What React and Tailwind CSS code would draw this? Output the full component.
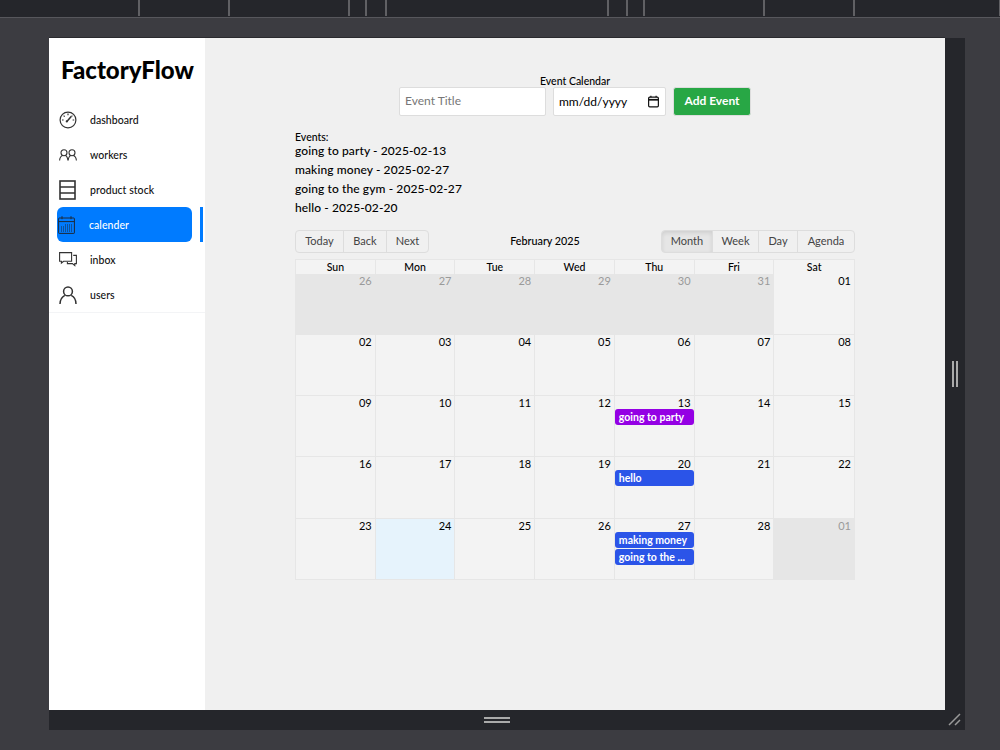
import React from "react";

const font = "font-['Lato','Noto_Sans',sans-serif]";

const GaugeIcon = () => (
  <svg width="18" height="18" viewBox="0 0 18 18" fill="none" stroke="#333" strokeWidth="1.2">
    <circle cx="9" cy="9" r="7.9" />
    <path d="M7.9 10.4 12.4 5.2" strokeWidth="1.5" />
    <circle cx="7.8" cy="10.4" r="1.1" fill="#333" stroke="none" />
    <path d="M9 2.6v1.6M3 9h1.6M13.6 9h1.6M4.6 4.6l1.1 1.1M13.4 4.6l-.8.8" />
  </svg>
);

const WorkersIcon = () => (
  <svg width="18" height="12" viewBox="0 0 18 12" fill="none" stroke="#333" strokeWidth="1.1">
    <circle cx="5" cy="3.7" r="3" />
    <circle cx="13" cy="3.7" r="3" />
    <path d="M.6 11.5C.8 8.6 2.4 6.9 3.6 6.5M6.4 6.5c1.2.5 2.2 2 2.5 5M9.2 11.5c.2-2.9 1.6-4.6 2.6-5M14.4 6.5c1.3.5 2.8 2.1 3 5" />
  </svg>
);

const StockIcon = () => (
  <svg width="17" height="20" viewBox="0 0 17 20" fill="none" stroke="#333" strokeWidth="1.6">
    <rect x="1" y="1" width="15" height="18" />
    <path d="M1 7h15M1 13h15" />
  </svg>
);

const CalendarIcon = () => {
  const dots = [];
  for (let y = 8.5; y <= 15; y += 2) {
    for (let x = 3; x <= 13; x += 2) {
      if (y === 8.5 && x < 7) continue;
      dots.push(<rect key={x + "-" + y} x={x} y={y} width="1" height="1" fill="#1c2a3a" stroke="none" />);
    }
  }
  return (
    <svg width="17" height="18" viewBox="0 0 17 18" fill="none" stroke="#1c2a3a" strokeWidth="1">
      <rect x=".6" y="2" width="15.8" height="15.4" rx=".6" />
      <path d="M.6 5.6h15.8M4 .2v3M13 .2v3" />
      {dots}
    </svg>
  );
};

const InboxIcon = () => (
  <svg width="18" height="15" viewBox="0 0 18 15" fill="none" stroke="#333" strokeWidth="1.1">
    <path d="M.6.6h12v8.6H4.6L2.4 11V9.2H.6z" />
    <path d="M14.2 3.4h3.2v8.2h-1.6v2l-2.4-2H8.4V10" />
  </svg>
);

const UserIcon = () => (
  <svg width="18" height="18" viewBox="0 0 18 18" fill="none" stroke="#333" strokeWidth="1.5">
    <circle cx="9" cy="5.4" r="4.4" />
    <path d="M1 18c0-4.4 2.6-7.4 4.8-8.6M12.2 9.4C14.6 10.6 17 13.6 17 18" />
  </svg>
);

const navItems = [
  { label: "dashboard", icon: <GaugeIcon /> },
  { label: "workers", icon: <WorkersIcon /> },
  { label: "product stock", icon: <StockIcon /> },
  { label: "calender", icon: <CalendarIcon />, active: true },
  { label: "inbox", icon: <InboxIcon /> },
  { label: "users", icon: <UserIcon /> },
];

const events = [
  "going to party - 2025-02-13",
  "making money - 2025-02-27",
  "going to the gym - 2025-02-27",
  "hello - 2025-02-20",
];

const weeks = [
  [
    { d: "26", off: true },
    { d: "27", off: true },
    { d: "28", off: true },
    { d: "29", off: true },
    { d: "30", off: true },
    { d: "31", off: true },
    { d: "01" },
  ],
  [{ d: "02" }, { d: "03" }, { d: "04" }, { d: "05" }, { d: "06" }, { d: "07" }, { d: "08" }],
  [
    { d: "09" },
    { d: "10" },
    { d: "11" },
    { d: "12" },
    { d: "13", ev: [{ t: "going to party", purple: true }] },
    { d: "14" },
    { d: "15" },
  ],
  [
    { d: "16" },
    { d: "17" },
    { d: "18" },
    { d: "19" },
    { d: "20", ev: [{ t: "hello" }] },
    { d: "21" },
    { d: "22" },
  ],
  [
    { d: "23" },
    { d: "24", today: true },
    { d: "25" },
    { d: "26" },
    { d: "27", ev: [{ t: "making money" }, { t: "going to the ..." }] },
    { d: "28" },
    { d: "01", off: true },
  ],
];

const rowHeights = ["h-[60px]", "h-[61px]", "h-[61px]", "h-[62px]", "h-[61px]"];

const Sidebar = () => (
  <aside className="w-[156px] shrink-0 bg-white">
    <div className="h-[64px] pl-[12px] pt-[18px] text-[24px] leading-[28px] font-black text-black whitespace-nowrap">
      FactoryFlow
    </div>
    <nav className="border-b border-gray-100">
      {navItems.map((item) => (
        <div key={item.label} className="relative flex h-[35px] items-center">
          <div
            className={
              "ml-2 flex h-[35px] w-[135px] items-center rounded-md " +
              (item.active ? "bg-[#007bff] text-white" : "text-[#111]")
            }
          >
            <span className={"flex w-[32px] items-center pl-[1px] " + (item.active ? "" : "ml-[1px]")}>
              {item.icon}
            </span>
            <span className="pt-[1px] text-[10.5px] font-medium leading-none tracking-[0.05px] whitespace-nowrap">
              {item.label}
            </span>
          </div>
          {item.active && <div className="ml-2 h-[35px] w-[3px] bg-[#007bff]" />}
        </div>
      ))}
    </nav>
  </aside>
);

const ToolButton = ({ label, active, first, last, width }) => (
  <div
    className={
      "flex h-[23px] items-center justify-center border border-[#ddd] text-[11px] text-[#444] -ml-[1px] first:ml-0 " +
      width + " " +
      (first ? "rounded-l " : "") +
      (last ? "rounded-r " : "") +
      (active ? "bg-[#e6e6e6] shadow-[inset_0_2px_4px_rgba(0,0,0,0.1)]" : "")
    }
  >
    {label}
  </div>
);

const MonthCell = ({ cell }) => (
  <div
    className={
      "border-r border-[#e6e6e6] last:border-r-0 " +
      (cell.off ? "bg-[#e6e6e6] " : cell.today ? "bg-[#e6f3fc] " : "")
    }
  >
    <div
      className={
        "h-[13px] pr-[3px] text-right text-[11px] leading-[14px] " +
        (cell.off ? "text-[#9a9a9a]" : "text-black")
      }
    >
      {cell.d}
    </div>
    <div className="flex flex-col gap-[1px]">
      {cell.ev?.map((e) => (
        <div
          key={e.t}
          className={
            "ml-[0.5px] h-[16px] rounded-[3px] pl-[3.5px] text-[10.5px] font-bold leading-[16px] text-white whitespace-nowrap overflow-hidden " +
            (e.purple ? "bg-[#9400e4]" : "bg-[#2b54e8]")
          }
        >
          {e.t}
        </div>
      ))}
    </div>
  </div>
);

const Calendar = () => (
  <div className="border border-[#e6e6e6] bg-[#f3f3f3]">
    <div className="grid h-[14px] grid-cols-7">
      {["Sun", "Mon", "Tue", "Wed", "Thu", "Fri", "Sat"].map((d) => (
        <div
          key={d}
          className="border-r border-[#e6e6e6] last:border-r-0 text-center text-[10.5px] leading-[14px] font-medium text-black"
        >
          {d}
        </div>
      ))}
    </div>
    {weeks.map((week, i) => (
      <div
        key={i}
        className={"grid grid-cols-7 " + rowHeights[i] + (i > 0 ? " border-t border-[#e6e6e6]" : "")}
      >
        {week.map((cell, j) => (
          <MonthCell key={j} cell={cell} />
        ))}
      </div>
    ))}
  </div>
);

const Main = () => (
  <main className="flex-1 bg-[#f0f0f0] pt-[37px]">
    <div className="mx-auto w-[560px] text-black">
      <div className="text-center text-[10.5px] font-medium leading-[12px]">Event Calendar</div>
      <div className="flex justify-center gap-[7px]">
        <input
          placeholder="Event Title"
          className="h-[29px] w-[147px] rounded-[2px] border border-[#ddd] bg-white px-[5px] pb-[2px] text-[12px] placeholder:text-[#777] outline-none"
        />
        <div className="flex h-[29px] w-[113px] items-center justify-between rounded-[2px] border border-[#ddd] bg-white pl-[5px] pr-[5px] text-[12px]">
          <span>mm/dd/yyyy</span>
          <svg width="13" height="13" viewBox="0 0 12 12" fill="none" stroke="#111" strokeWidth="1.1">
            <rect x="1.5" y="2" width="9" height="9" rx="1" />
            <path d="M1.5 4.4h9" strokeWidth="1.6" />
            <path d="M3.6.6v1.4M8.4.6v1.4" />
          </svg>
        </div>
        <button className="h-[29px] w-[78px] rounded-[3px] border border-[#ddd] bg-[#28a745] pb-[2px] text-[12px] font-bold text-white">
          Add Event
        </button>
      </div>

      <div className="mt-[15px] text-[10.5px] font-medium leading-[12px]">Events:</div>
      <ul className="-mt-[2px]">
        {events.map((e) => (
          <li key={e} className="h-[19px] text-[12px] font-medium leading-[19px] tracking-[0.1px]">
            {e}
          </li>
        ))}
      </ul>

      <div className="mt-[13px] flex h-[23px] items-center justify-between">
        <div className="flex">
          <ToolButton label="Today" first width="w-[49px]" />
          <ToolButton label="Back" width="w-[44px]" />
          <ToolButton label="Next" last width="w-[43px]" />
        </div>
        <div className="text-[10.75px] font-medium">February 2025</div>
        <div className="flex">
          <ToolButton label="Month" active first width="w-[52px]" />
          <ToolButton label="Week" width="w-[47px]" />
          <ToolButton label="Day" width="w-[40px]" />
          <ToolButton label="Agenda" last width="w-[58px]" />
        </div>
      </div>
      <div className="mt-[6px]">
        <Calendar />
      </div>
    </div>
  </main>
);

const ticks = [138, 228, 348, 365, 385, 607, 626, 643, 763, 853, 999];

const Ruler = () => (
  <div className="flex h-[18px] shrink-0 overflow-hidden border-b border-[#57575c] bg-[#25262b]">
    {ticks.map((x, i) => (
      <div
        key={x}
        className="h-[16px] w-[2px] shrink-0 bg-[#606064]"
        style={{ marginLeft: x - (i > 0 ? ticks[i - 1] + 2 : 0) }}
      />
    ))}
  </div>
);

export default function App() {
  return (
    <div className={"flex h-screen w-full flex-col overflow-hidden bg-[#3c3c41] " + font}>
      <Ruler />
      <div className="pl-[49px] pt-[20px]">
        <div className="w-[916px]">
          <div className="flex h-[672px]">
            <div className="flex w-[896px] shadow-[0_-1px_0_#2a2a2e]">
              <Sidebar />
              <Main />
            </div>
            <div className="flex w-[20px] items-center justify-center gap-[2px] bg-[#25262b]">
              <div className="h-[26px] w-[2px] bg-[#aaa]" />
              <div className="h-[26px] w-[2px] bg-[#aaa]" />
            </div>
          </div>
          <div className="relative flex h-[20px] items-center bg-[#25262b] pr-[20px]">
            <div className="mx-auto flex flex-col gap-[2px]">
              <div className="h-[2px] w-[26px] bg-[#aaa]" />
              <div className="h-[2px] w-[26px] bg-[#aaa]" />
            </div>
            <svg className="absolute right-[3px] top-[3px]" width="14" height="14" viewBox="0 0 14 14" stroke="#999" strokeWidth="1.5">
              <path d="M1 12 12 1M7 12l5-5" />
            </svg>
          </div>
        </div>
      </div>
    </div>
  );
}
